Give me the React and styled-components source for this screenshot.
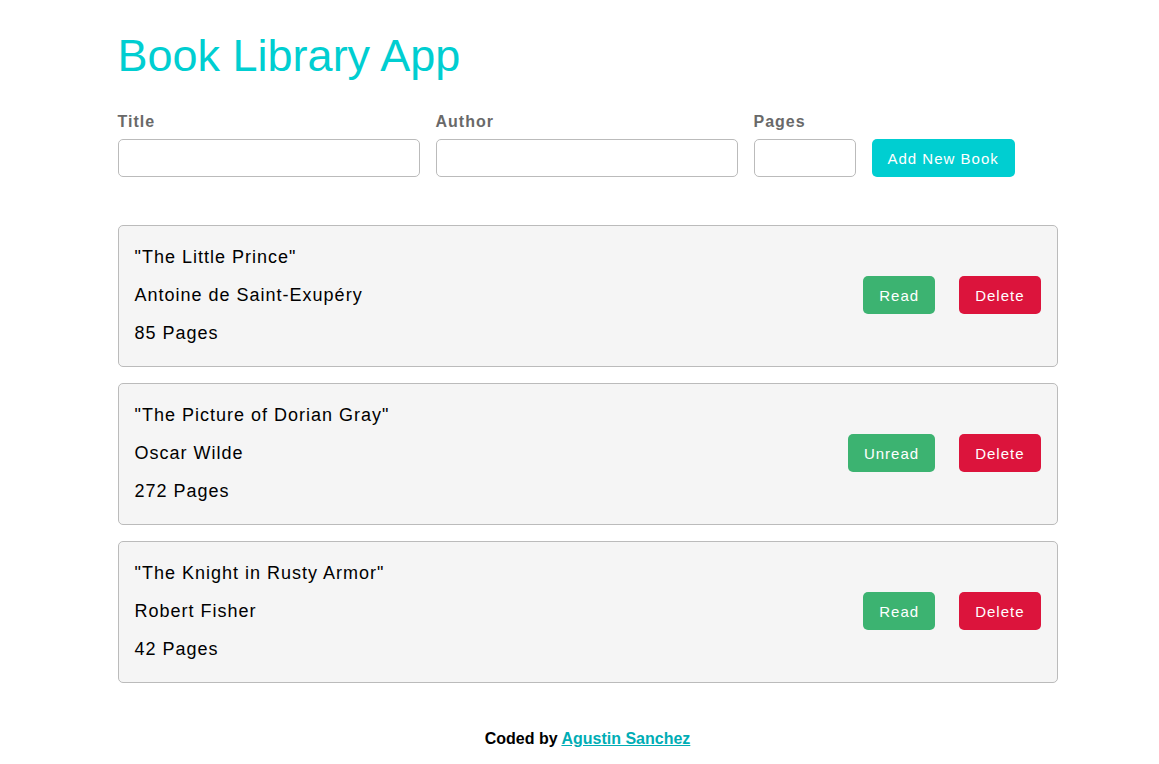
import React from "react";
import styled, { createGlobalStyle } from "styled-components";

const GlobalStyle = createGlobalStyle`
  *, *::before, *::after { box-sizing: border-box; }
  body {
    margin: 0;
    background: #fff;
    color: #000;
    font-family: "Liberation Sans", Arial, sans-serif;
  }
`;

const Page = styled.div`
  max-width: 972px;
  margin: 0 auto;
  padding: 29px 8px 0 24px;
`;

const Heading = styled.h1`
  margin: 0 0 29px;
  color: #00ced1;
  font-size: 45px;
  font-weight: 400;
  line-height: 53px;
`;

const BookForm = styled.form`
  display: flex;
  align-items: flex-end;
  gap: 16px;
  margin-bottom: 48px;
`;

const Field = styled.div`
  display: flex;
  flex-direction: column;
  flex: 0 1 ${(p) => p.$width}px;
  min-width: 0;
`;

const Label = styled.label`
  margin-bottom: 6px;
  color: #696969;
  font-size: 16px;
  font-weight: 700;
  letter-spacing: 1px;
  line-height: 22px;
`;

const Input = styled.input`
  width: 100%;
  height: 38px;
  padding: 8px;
  border: 1px solid #bbb;
  border-radius: 5px;
  font: inherit;
  font-size: 16px;
`;

const tones = { add: "#00ced1", status: "#3cb371", remove: "#dc143c" };

const Button = styled.button`
  flex: none;
  height: 38px;
  padding: 0 16px;
  border: 0;
  border-radius: 5px;
  background: ${(p) => tones[p.$tone]};
  color: #fff;
  font-family: inherit;
  font-size: 15px;
  letter-spacing: 1px;
  cursor: pointer;
`;

const BookList = styled.ul`
  display: flex;
  flex-direction: column;
  gap: 16px;
  margin: 0;
  padding: 0;
  list-style: none;
`;

const BookCard = styled.li`
  display: flex;
  align-items: center;
  justify-content: space-between;
  padding: 20px 16px 22px;
  border: 1px solid #bbb;
  border-radius: 5px;
  background: #f5f5f5;
`;

const Details = styled.div`
  display: flex;
  flex-direction: column;
  gap: 16px;
`;

const Line = styled.p`
  margin: 0;
  font-size: 18px;
  letter-spacing: 1px;
  line-height: 22px;
`;

const Actions = styled.div`
  display: flex;
  gap: 24px;
`;

const Footer = styled.footer`
  margin-top: 46px;
  font-size: 16px;
  font-weight: 700;
  line-height: 20px;
  text-align: center;
`;

const AuthorLink = styled.a`
  color: #00adb5;
`;

const books = [
  { title: "The Little Prince", author: "Antoine de Saint-Exupéry", pages: 85, status: "Read" },
  { title: "The Picture of Dorian Gray", author: "Oscar Wilde", pages: 272, status: "Unread" },
  { title: "The Knight in Rusty Armor", author: "Robert Fisher", pages: 42, status: "Read" },
];

export default function App() {
  return (
    <Page>
      <GlobalStyle />
      <Heading>Book Library App</Heading>
      <BookForm onSubmit={(e) => e.preventDefault()}>
        <Field $width={302}>
          <Label htmlFor="title">Title</Label>
          <Input id="title" type="text" />
        </Field>
        <Field $width={302}>
          <Label htmlFor="author">Author</Label>
          <Input id="author" type="text" />
        </Field>
        <Field $width={102}>
          <Label htmlFor="pages">Pages</Label>
          <Input id="pages" type="number" />
        </Field>
        <Button type="submit" $tone="add">Add New Book</Button>
      </BookForm>
      <BookList>
        {books.map((book) => (
          <BookCard key={book.title}>
            <Details>
              <Line>"{book.title}"</Line>
              <Line>{book.author}</Line>
              <Line>{book.pages} Pages</Line>
            </Details>
            <Actions>
              <Button type="button" $tone="status">{book.status}</Button>
              <Button type="button" $tone="remove">Delete</Button>
            </Actions>
          </BookCard>
        ))}
      </BookList>
      <Footer>
        Coded by <AuthorLink href="#">Agustin Sanchez</AuthorLink>
      </Footer>
    </Page>
  );
}
